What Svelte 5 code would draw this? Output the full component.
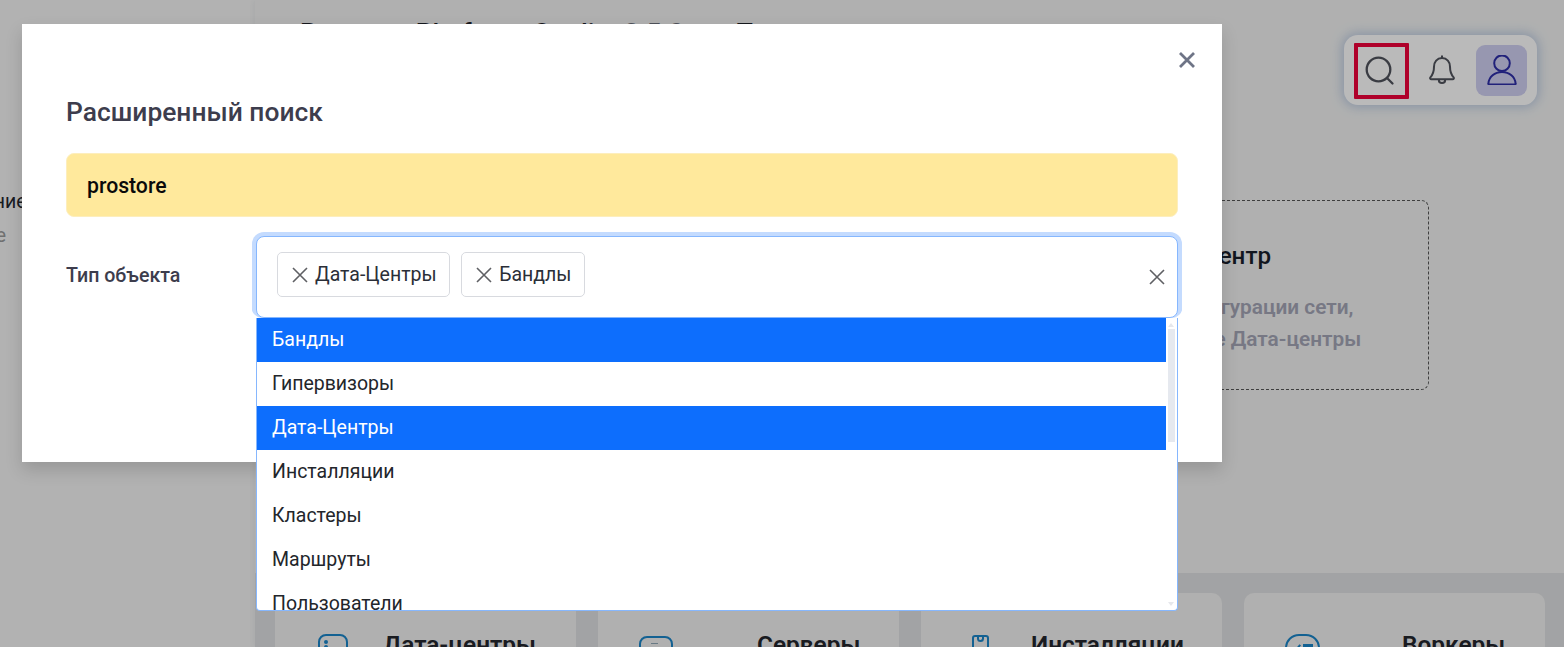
<script>
  const options = [
    { label: 'Бандлы', selected: true },
    { label: 'Гипервизоры' },
    { label: 'Дата-Центры', selected: true },
    { label: 'Инсталляции' },
    { label: 'Кластеры' },
    { label: 'Маршруты' },
    { label: 'Пользователи' },
    { label: 'Роли' }
  ];
  const tags = ['Дата-Центры', 'Бандлы'];
  const cards = ['Дата-центры', 'Серверы', 'Инсталляции', 'Воркеры'];
</script>

<div class="page">
  <aside class="side">
    <div class="side-item">Управление</div>
    <div class="side-sub">Настройке</div>
  </aside>

  <main class="main">
    <header class="head">
      <div class="crumb">Prostore Platform Studio <span class="ver">3.5.0 ru</span> Топ</div>
      <div class="tools">
        <button class="tool active" aria-label="Поиск">
          <svg width="30" height="30" viewBox="0 0 30 30" fill="none" stroke="#50535c" stroke-width="2.300" stroke-linecap="round">
            <circle cx="13.5" cy="13.5" r="11.800" />
            <path d="M23 23l4.500 4.500" />
          </svg>
        </button>
        <button class="tool bell" aria-label="Уведомления">
          <svg width="26" height="32" viewBox="0 0 26 32" fill="none" stroke="#50535c" stroke-width="2" stroke-linejoin="round">
            <path d="M13 1.500v2.600M13 4.100c-5 0-8 3.800-8 8.600 0 5.500-1.300 8-3.600 10.600-.6.800-.2 2 1 2h21.200c1.200 0 1.600-1.200 1-2-2.300-2.600-3.600-5.100-3.600-10.600 0-4.800-3-8.600-8-8.600z" />
            <path d="M9.800 25.500c0 2.200 1.400 3.600 3.200 3.600s3.200-1.400 3.200-3.600" />
          </svg>
        </button>
        <button class="tool avatar" aria-label="Профиль">
          <svg width="30" height="30" viewBox="0 0 30 30" fill="none" stroke="#2e2ea8" stroke-width="2">
            <circle cx="15" cy="8.200" r="7.800" />
            <path d="M15 17c-7.500 0-13 5-13.600 11.500-.1.600.3 1 .9 1h25.400c.6 0 1-.4.9-1C28 22 22.500 17 15 17z" />
          </svg>
        </button>
      </div>
    </header>

    <section class="empty">
      <h3 class="empty-title">Создать Дата-центр</h3>
      <p class="empty-text">Для полной конфигурации сети,<br />нужно создать все Дата-центры</p>
    </section>

    <section class="band">
      {#each cards as card, i}
        <article class="stat">
          <span class="stat-icon i{i}"><i></i><b></b></span>
          <span class="stat-name n{i}">{card}</span>
        </article>
      {/each}
    </section>
  </main>

  <div class="scrim"></div>

  <div class="modal" role="dialog">
    <button class="close" aria-label="Закрыть">
      <svg width="18" height="18" viewBox="0 0 18 18" fill="none" stroke="#6e7486" stroke-width="2.800">
        <path d="M2 2l14 14M16 2L2 16" />
      </svg>
    </button>
    <h2 class="title">Расширенный поиск</h2>
    <div class="alert">prostore</div>
    <div class="row">
      <div class="label">Тип объекта</div>
      <div class="select">
        <div class="control">
          {#each tags as tag}
            <span class="tag">
              <svg width="16" height="16" viewBox="0 0 16 16" fill="none" stroke="#5f6064" stroke-width="1.600">
                <path d="M1 1l14 14M15 1L1 15" />
              </svg>
              {tag}
            </span>
          {/each}
          <svg class="clear" width="16" height="16" viewBox="0 0 16 16" fill="none" stroke="#5f6064" stroke-width="1.600">
            <path d="M1 1l14 14M15 1L1 15" />
          </svg>
        </div>
        <div class="menu">
          <ul class="list">
            {#each options as o}
              <li class:sel={o.selected}>{o.label}</li>
            {/each}
          </ul>
          <div class="scroll">
            <span class="arrow up"></span>
            <span class="thumb"></span>
            <span class="arrow down"></span>
          </div>
        </div>
      </div>
    </div>
  </div>
</div>

<style>
  :global(body) {
    margin: 0;
    font-family: Roboto, "Liberation Sans", sans-serif;
  }
  .page {
    position: relative;
    display: flex;
    width: 1564px;
    height: 647px;
    overflow: hidden;
    background: #f5f5f5;
  }
  .side {
    flex: 0 0 255px;
    padding-top: 190px;
    box-sizing: border-box;
    background: #f5f5f5;
    white-space: nowrap;
  }
  .side-item {
    margin-left: -83px;
    font-size: 19.500px;
    line-height: 23px;
    color: #23252d;
  }
  .side-sub {
    margin: 11px 0 0 -92px;
    font-size: 19.500px;
    line-height: 23px;
    color: #9a9a9a;
  }
  .main {
    flex: 1;
    display: flex;
    flex-direction: column;
    min-width: 0;
    background: #f1f2f2;
    box-shadow: -2px 0 6px rgba(40, 50, 70, 0.06);
  }
  .head {
    display: flex;
    justify-content: space-between;
    height: 200px;
    padding: 18px 27px 0 45px;
    box-sizing: border-box;
  }
  .crumb {
    font-size: 26.400px;
    line-height: 30px;
    font-weight: 500;
    word-spacing: 8px;
    color: #1d2129;
    white-space: nowrap;
  }
  .ver { color: #6b6f7a; }
  .tools {
    display: flex;
    align-items: center;
    gap: 17px;
    align-self: flex-start;
    margin-top: 17px;
    width: 193px;
    height: 70px;
    box-sizing: border-box;
    padding: 0 10px;
    background: #fff;
    border-radius: 14px;
    box-shadow: 0 0 10px 3px rgba(150, 175, 215, 0.5);
  }
  .tool {
    display: flex;
    flex: none;
    align-items: center;
    justify-content: center;
    padding: 0;
    border: 0;
    background: none;
  }
  .active {
    width: 55px;
    height: 56px;
    margin-top: 2px;
    box-sizing: border-box;
    border: 4px solid #f0003a;
    border-radius: 1px;
  }
  .active svg { margin-right: 3px; }
  .bell { width: 34px; margin-left: -1px; }
  .avatar {
    width: 51px;
    height: 51px;
    background: #d0d0f1;
    border-radius: 9px;
  }
  .empty {
    align-self: flex-end;
    width: 500px;
    height: 190px;
    margin-right: 135px;
    box-sizing: border-box;
    padding: 40px 0 0 109px;
    border: 1px dashed #555;
    border-radius: 8px;
  }
  .empty-title {
    margin: 0;
    font-size: 24.200px;
    line-height: 30px;
    font-weight: 500;
    color: #1a1f2b;
    white-space: nowrap;
  }
  .empty-text {
    margin: 20px 0 0;
    font-size: 20.800px;
    line-height: 32px;
    font-weight: 600;
    color: #a4a5b6;
    white-space: nowrap;
  }
  .band {
    display: grid;
    grid-template-columns: repeat(4, 301px);
    gap: 22px;
    margin-top: auto;
    height: 74px;
    box-sizing: border-box;
    padding: 20px 0 0 20px;
    background: #dfe0e2;
  }
  .stat {
    position: relative;
    height: 100px;
    background: #f1f1f1;
    border-radius: 10px;
  }
  .stat-name {
    position: absolute;
    top: 38px;
    font-size: 24.400px;
    line-height: 28px;
    font-weight: 600;
    color: #23252d;
    white-space: nowrap;
  }
  .n0 { left: 108px; }
  .n1 { left: 159px; }
  .n2 { left: 110px; }
  .n3 { left: 158px; }
  .stat-icon {
    position: absolute;
    box-sizing: border-box;
    border: 2.500px solid #1b86c9;
    height: 40px;
  }
  .i0 { left: 43px; top: 41px; width: 30px; border-radius: 8px; }
  .i0 i { position: absolute; left: 4px; top: 4px; width: 4px; height: 4px; background: #1b86c9; border-radius: 50%; }
  .i0 b { position: absolute; left: 4px; top: 9px; width: 4px; height: 4px; background: #1b86c9; border-radius: 50%; }
  .i1 { left: 41px; top: 43px; width: 34px; border-radius: 8px; }
  .i1 i { position: absolute; left: 10px; top: 5px; width: 7px; height: 1px; background: #8fa7b5; }
  .i2 { left: 51px; top: 42px; width: 17px; border-radius: 3px; }
  .i2 i { position: absolute; left: 2.500px; top: -2.500px; width: 7px; height: 7px; box-sizing: border-box; border: 2.500px solid #1b86c9; border-top: 0; border-radius: 0 0 4px 4px; }
  .i3 { left: 41px; top: 41px; width: 35px; border-radius: 14px; }
  .i3 i { position: absolute; left: 7px; top: 7px; width: 5px; height: 8px; box-sizing: border-box; border-right: 2.500px solid #1b86c9; border-bottom: 2.500px solid #1b86c9; transform: rotate(40deg); }
  .i3 b { position: absolute; left: 16px; top: 8px; width: 10px; height: 2.500px; background: #1b86c9; }

  .scrim {
    position: absolute;
    inset: 0;
    background: rgba(0, 0, 0, 0.27);
  }
  .modal {
    position: absolute;
    left: 22px;
    top: 24px;
    width: 1200px;
    height: 438px;
    box-sizing: border-box;
    padding: 70px 44px 0;
    background: #fff;
    box-shadow: 0 8px 16px rgba(0, 0, 0, 0.15);
  }
  .close {
    position: absolute;
    top: 27px;
    right: 26px;
    display: flex;
    padding: 0;
    border: 0;
    background: none;
  }
  .title {
    margin: 0;
    font-size: 26.400px;
    line-height: 36px;
    font-weight: 500;
    color: #3d3d4d;
  }
  .alert {
    margin-top: 23px;
    height: 64px;
    box-sizing: border-box;
    padding: 0 20px;
    display: flex;
    align-items: center;
    font-size: 21.200px;
    font-weight: 500;
    color: #0a0a0a;
    background: #ffe99c;
    border: 1px solid #fdeebd;
    border-radius: 8px;
  }
  .row {
    display: flex;
    margin-top: 19px;
  }
  .label {
    flex: 0 0 190px;
    padding-top: 29px;
    font-size: 19.600px;
    line-height: 22px;
    font-weight: 500;
    color: #3d3d4d;
  }
  .select {
    position: relative;
    flex: 1;
  }
  .control {
    position: relative;
    display: flex;
    gap: 11px;
    height: 82px;
    box-sizing: border-box;
    padding: 15px 20px;
    background: #fff;
    border: 1px solid #86b7fe;
    border-radius: 8px;
    box-shadow: 0 0 0 4px #c4dbfe;
    clip-path: inset(-5px -5px 0 -5px round 12px);
  }
  .tag {
    display: flex;
    align-items: center;
    gap: 7px;
    height: 45px;
    box-sizing: border-box;
    padding: 0 12.500px 0 14px;
    font-size: 19.500px;
    color: #2b2f38;
    background: #fff;
    border: 1px solid #d8dadf;
    border-radius: 5px;
  }
  .clear {
    position: absolute;
    right: 12px;
    top: 32px;
  }
  .menu {
    position: absolute;
    left: 0;
    right: 0;
    top: 82px;
    height: 293px;
    box-sizing: border-box;
    display: flex;
    overflow: hidden;
    background: #fff;
    border: 1px solid #86b7fe;
    border-top: 0;
    border-radius: 0 0 4px 4px;
  }
  .list {
    flex: 1;
    margin: 0;
    padding: 0;
    list-style: none;
  }
  .list li {
    height: 44px;
    padding: 0 15px;
    font-size: 19.500px;
    line-height: 44px;
    color: #23262b;
  }
  .list li.sel {
    color: #fff;
    background: #0d6efd;
  }
  .scroll {
    flex: 0 0 11px;
    position: relative;
  }
  .thumb {
    position: absolute;
    left: 2px;
    top: 11px;
    width: 7px;
    height: 113px;
    background: #e6e9ef;
  }
  .arrow {
    position: absolute;
    left: 2px;
    width: 0;
    height: 0;
    border-left: 3.500px solid transparent;
    border-right: 3.500px solid transparent;
  }
  .up { top: 5px; border-bottom: 4px solid #e6e8ec; }
  .down { bottom: 4px; border-top: 4px solid #e6e8ec; }
</style>
